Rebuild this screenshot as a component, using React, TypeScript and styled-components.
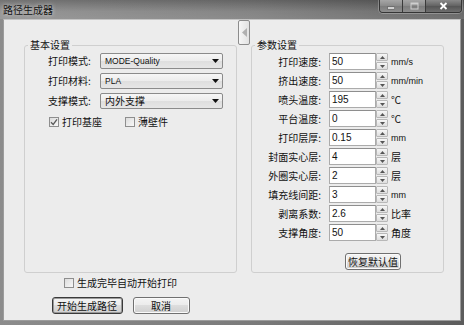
import React from "react";
import styled, { createGlobalStyle } from "styled-components";

const GlobalStyle = createGlobalStyle`
  html, body {
    margin: 0;
    padding: 0;
  }
  body {
    width: 464px;
    height: 325px;
    overflow: hidden;
    background: #6c6c6c;
    font-family: "Noto Sans CJK SC", "Noto Sans", sans-serif;
  }
`;

const Window = styled.div`
  width: 464px;
  height: 325px;
  display: flex;
  flex-direction: column;
  background: linear-gradient(to right, #8c8c8c 0%, #7a7a7a 55%, #5c5c5c 100%);
`;

const TitleBar = styled.div`
  height: 19px;
  flex: none;
  display: flex;
  justify-content: space-between;
  align-items: flex-start;
  padding: 0 2px 0 3px;
  background: linear-gradient(to bottom, rgba(0, 0, 0, 0.18), rgba(255, 255, 255, 0.08) 60%, rgba(255, 255, 255, 0.12));
`;

const Title = styled.span`
  font-size: 10px;
  line-height: 19px;
  color: #141414;
  text-shadow: 0 0 4px rgba(255, 255, 255, 0.75);
`;

const Controls = styled.div`
  display: flex;
  height: 12px;
  border: 1px solid #353535;
  border-top: none;
  border-radius: 0 0 4px 4px;
  overflow: hidden;
  box-shadow: 0 0 0 1px rgba(255, 255, 255, 0.25);
`;

const ControlButton = styled.div<{ $width: number; $dark?: boolean }>`
  width: ${({ $width }) => $width}px;
  display: flex;
  align-items: center;
  justify-content: center;
  background: ${({ $dark }) =>
    $dark
      ? "linear-gradient(to bottom, #8a8a8a, #626262 50%, #555555 50%, #6e6e6e)"
      : "linear-gradient(to bottom, #a6a6a6, #8a8a8a 50%, #7c7c7c 50%, #8e8e8e)"};
  & + & {
    border-left: 1px solid #3a3a3a;
  }
`;

const Frame = styled.div`
  flex: 1;
  display: flex;
  padding: 0 3px 4px 3px;
  min-height: 0;
`;

const Client = styled.div`
  flex: 1;
  display: flex;
  flex-direction: column;
  background: #ececec;
  border: 1px solid #9c9c9c;
  border-top-color: #c4c4c4;
`;

const MainRow = styled.div`
  display: flex;
  align-items: flex-start;
`;

const LeftPane = styled.div`
  width: 233px;
  flex: none;
  display: flex;
  flex-direction: column;
`;

const Group = styled.fieldset<{ $width: number; $left: number }>`
  box-sizing: border-box;
  width: ${({ $width }) => $width}px;
  height: 234px;
  margin: 19px 0 0 ${({ $left }) => $left}px;
  padding: 2px 0 1px 0;
  border: 1px solid #cfcfcf;
  border-radius: 3px;
  min-width: 0;
`;

const Legend = styled.legend`
  font-size: 10px;
  line-height: 12px;
  padding: 0 2px;
  margin-left: 3px;
  color: #111;
`;

const FieldLabel = styled.span<{ $width: number; $align: string }>`
  width: ${({ $width }) => $width}px;
  flex: none;
  text-align: ${({ $align }) => $align};
  font-size: 10px;
  line-height: 12px;
  color: #111;
  white-space: nowrap;
`;

const ComboRow = styled.div`
  display: flex;
  align-items: center;
  height: 16px;
  padding-left: 23px;
  & + & {
    margin-top: 4px;
  }
`;

const Combo = styled.div`
  box-sizing: border-box;
  width: 123px;
  height: 16px;
  display: flex;
  align-items: center;
  justify-content: space-between;
  padding: 0 3px 0 4px;
  border: 1px solid #8b8b8b;
  border-radius: 2px;
  background: linear-gradient(to bottom, #f6f6f6, #ececec 50%, #dedede 50%, #e6e6e6);
`;

const ComboText = styled.span<{ $latin?: boolean }>`
  font-family: ${({ $latin }) => ($latin ? '"Liberation Sans", Arial, sans-serif' : '"Noto Sans CJK SC", sans-serif')};
  font-size: ${({ $latin }) => ($latin ? "8.5px" : "10px")};
  line-height: 12px;
  color: #111;
`;

const CheckRow = styled.div<{ $center?: boolean }>`
  display: flex;
  align-items: center;
  height: 12px;
  justify-content: ${({ $center }) => ($center ? "center" : "flex-start")};
  margin-top: ${({ $center }) => ($center ? "4px" : "7px")};
  padding-left: ${({ $center }) => ($center ? "0" : "24px")};
`;

const CheckItem = styled.label<{ $width?: number }>`
  display: flex;
  align-items: center;
  gap: 3px;
  width: ${({ $width }) => ($width ? `${$width}px` : "auto")};
  font-size: 10px;
  line-height: 12px;
  color: #111;
`;

const Box = styled.span`
  box-sizing: border-box;
  width: 10px;
  height: 10px;
  display: flex;
  align-items: center;
  justify-content: center;
  border: 1px solid #8e8e8e;
  background: linear-gradient(135deg, #dcdcdc, #f8f8f8);
`;

const ButtonRow = styled.div`
  display: flex;
  justify-content: center;
  gap: 10px;
  margin-top: 8px;
`;

const PushButton = styled.div<{ $width: number; $default?: boolean }>`
  box-sizing: border-box;
  width: ${({ $width }) => $width}px;
  height: 17px;
  display: flex;
  align-items: center;
  justify-content: center;
  font-size: 10px;
  line-height: 12px;
  color: #111;
  border: 1px solid ${({ $default }) => ($default ? "#3a3a3a" : "#707070")};
  border-radius: 3px;
  background: linear-gradient(to bottom, #f4f4f4, #ebebeb 50%, #dddddd 50%, #cfcfcf);
  box-shadow: ${({ $default }) => ($default ? "inset 0 0 0 1px #9a9a9a" : "inset 0 0 0 1px #fafafa")};
`;

const Splitter = styled.div`
  box-sizing: border-box;
  width: 12px;
  height: 25px;
  flex: none;
  margin-left: 1px;
  display: flex;
  align-items: center;
  justify-content: center;
  border: 1px solid #8c8c8c;
  border-radius: 2px;
  background: linear-gradient(to right, #f6f6f6, #e2e2e2);
`;

const ParamRow = styled.div`
  display: flex;
  align-items: center;
  height: 17px;
  & + & {
    margin-top: 2px;
  }
`;

const NumberInput = styled.div`
  box-sizing: border-box;
  width: 47px;
  height: 17px;
  margin-left: 8px;
  padding-left: 2px;
  display: flex;
  align-items: center;
  border: 1px solid #ababab;
  border-top-color: #8e8e8e;
  background: #fff;
  font-family: "Liberation Sans", Arial, sans-serif;
  font-size: 10px;
  color: #111;
`;

const Spin = styled.div`
  width: 12px;
  height: 17px;
  display: flex;
  flex-direction: column;
  gap: 1px;
`;

const SpinButton = styled.div`
  box-sizing: border-box;
  flex: 1;
  display: flex;
  align-items: center;
  justify-content: center;
  border: 1px solid #b8b8b8;
  border-radius: 1px;
  background: linear-gradient(to bottom, #f7f7f7, #dedede);
`;

const Unit = styled.span`
  margin-left: 3px;
  font-family: "Liberation Sans", "Noto Sans CJK SC", sans-serif;
  font-size: 9px;
  line-height: 12px;
  color: #111;
  white-space: nowrap;
`;

const CjkUnit = styled(Unit)`
  font-family: "Noto Sans CJK SC", sans-serif;
  font-size: 10px;
`;

const ResetButton = styled(PushButton)`
  margin: 12px 0 0 93px;
`;

const params = [
  { label: "打印速度:", value: "50", unit: "mm/s" },
  { label: "挤出速度:", value: "50", unit: "mm/min" },
  { label: "喷头温度:", value: "195", unit: "℃", cjk: true },
  { label: "平台温度:", value: "0", unit: "℃", cjk: true },
  { label: "打印层厚:", value: "0.15", unit: "mm" },
  { label: "封面实心层:", value: "4", unit: "层", cjk: true },
  { label: "外圈实心层:", value: "2", unit: "层", cjk: true },
  { label: "填充线间距:", value: "3", unit: "mm" },
  { label: "剥离系数:", value: "2.6", unit: "比率", cjk: true },
  { label: "支撑角度:", value: "50", unit: "角度", cjk: true },
];

const combos = [
  { label: "打印模式:", value: "MODE-Quality", latin: true },
  { label: "打印材料:", value: "PLA", latin: true },
  { label: "支撑模式:", value: "内外支撑", latin: false },
];

function Arrow({ up }: { up?: boolean }) {
  return (
    <svg width="5" height="3" viewBox="0 0 5 3">
      <path d={up ? "M0 3 L2.5 0 L5 3 Z" : "M0 0 L5 0 L2.5 3 Z"} fill="#555" />
    </svg>
  );
}

function CheckBox({ checked }: { checked?: boolean }) {
  return (
    <Box>
      {checked && (
        <svg width="8" height="8" viewBox="0 0 8 8">
          <path d="M1 4.2 L3.2 6.4 L7 1.4" stroke="#5a5a5a" strokeWidth="1.3" fill="none" />
        </svg>
      )}
    </Box>
  );
}

export default function App() {
  return (
    <Window>
      <GlobalStyle />
      <TitleBar>
        <Title>路径生成器</Title>
        <Controls>
          <ControlButton $width={22}>
            <svg width="8" height="8" viewBox="0 0 8 8">
              <rect x="0.5" y="5" width="7" height="2" fill="#fff" stroke="#444" strokeWidth="0.5" />
            </svg>
          </ControlButton>
          <ControlButton $width={22}>
            <svg width="9" height="8" viewBox="0 0 9 8">
              <rect x="1" y="1" width="7" height="6" fill="none" stroke="#cfcfcf" strokeWidth="1" />
              <rect x="1" y="1" width="7" height="1.5" fill="#cfcfcf" />
            </svg>
          </ControlButton>
          <ControlButton $width={35} $dark>
            <svg width="9" height="8" viewBox="0 0 9 8">
              <path d="M1.5 1 L7.5 7 M7.5 1 L1.5 7" stroke="#fff" strokeWidth="1.8" />
            </svg>
          </ControlButton>
        </Controls>
      </TitleBar>
      <Frame>
        <Client>
          <MainRow>
            <LeftPane>
              <Group $width={213} $left={20}>
                <Legend>基本设置</Legend>
                {combos.map((c) => (
                  <ComboRow key={c.label}>
                    <FieldLabel $width={52} $align="left">
                      {c.label}
                    </FieldLabel>
                    <Combo>
                      <ComboText $latin={c.latin}>{c.value}</ComboText>
                      <svg width="7" height="4" viewBox="0 0 7 4">
                        <path d="M0 0 L7 0 L3.5 4 Z" fill="#111" />
                      </svg>
                    </Combo>
                  </ComboRow>
                ))}
                <CheckRow>
                  <CheckItem $width={76}>
                    <CheckBox checked />
                    打印基座
                  </CheckItem>
                  <CheckItem>
                    <CheckBox />
                    薄壁件
                  </CheckItem>
                </CheckRow>
              </Group>
              <CheckRow $center>
                <CheckItem>
                  <CheckBox />
                  生成完毕自动开始打印
                </CheckItem>
              </CheckRow>
              <ButtonRow>
                <PushButton $width={71} $default>
                  开始生成路径
                </PushButton>
                <PushButton $width={57}>取消</PushButton>
              </ButtonRow>
            </LeftPane>
            <Splitter>
              <svg width="5" height="9" viewBox="0 0 5 9">
                <path d="M5 0 L0 4.5 L5 9 Z" fill="#b0b0b0" />
              </svg>
            </Splitter>
            <Group $width={193} $left={1}>
              <Legend>参数设置</Legend>
              {params.map((p) => (
                <ParamRow key={p.label}>
                  <FieldLabel $width={69} $align="right">
                    {p.label}
                  </FieldLabel>
                  <NumberInput>{p.value}</NumberInput>
                  <Spin>
                    <SpinButton>
                      <Arrow up />
                    </SpinButton>
                    <SpinButton>
                      <Arrow />
                    </SpinButton>
                  </Spin>
                  {p.cjk ? <CjkUnit>{p.unit}</CjkUnit> : <Unit>{p.unit}</Unit>}
                </ParamRow>
              ))}
              <ResetButton $width={56}>恢复默认值</ResetButton>
            </Group>
          </MainRow>
        </Client>
      </Frame>
    </Window>
  );
}
